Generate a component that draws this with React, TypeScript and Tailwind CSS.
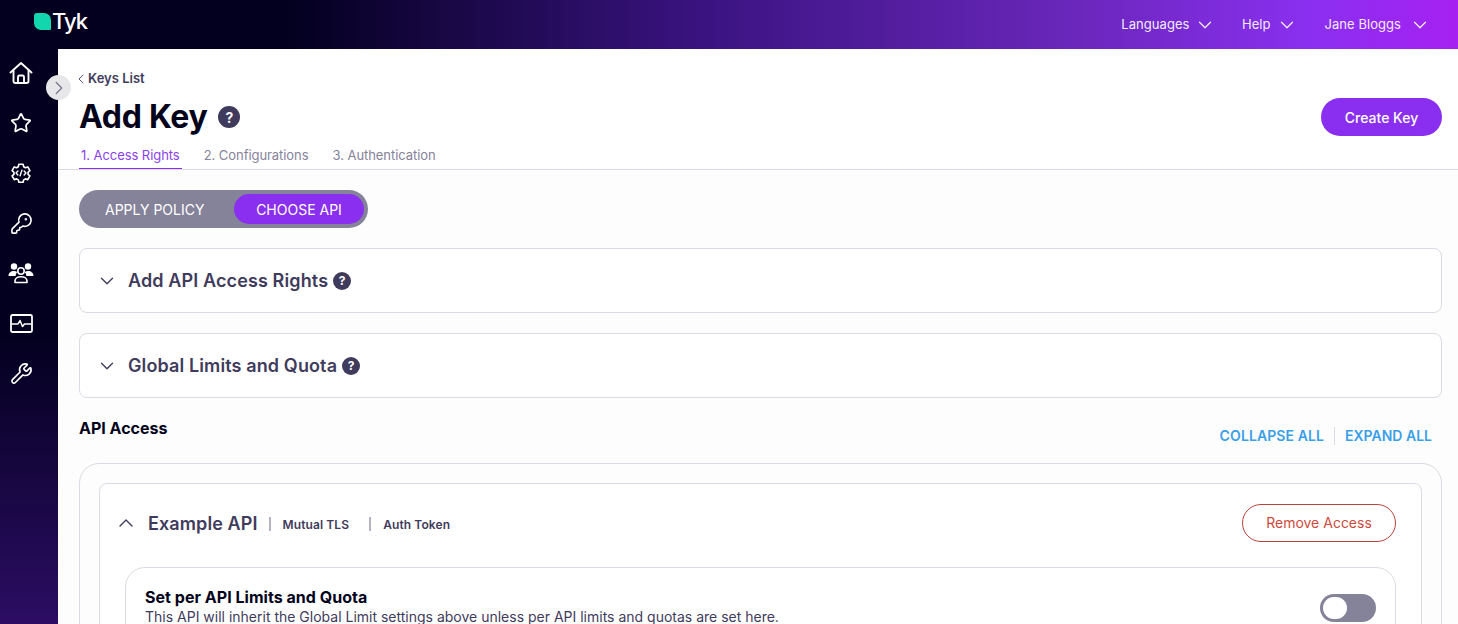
import { ChevronDown, ChevronLeft, ChevronRight, ChevronUp, KeyRound, Star, Wrench } from 'lucide-react'

function HelpDot({ size }: { size: string }) {
  return (
    <span className={`${size} inline-flex items-center justify-center rounded-full bg-[#3f3b5c] font-bold text-white`}>
      ?
    </span>
  )
}

function Home() {
  return (
    <svg width="24" height="24" viewBox="0 0 24 24" fill="none" stroke="white" strokeWidth="1.9" strokeLinejoin="round" strokeLinecap="round">
      <path d="M1.500 11.500 12 2l10.500 9.500" />
      <path d="M4.500 9.500v10.500a2 2 0 0 0 2 2h11a2 2 0 0 0 2-2V9.500" />
      <path d="M9 22v-6a1.500 1.500 0 0 1 1.500-1.500h3A1.500 1.500 0 0 1 15 16v6" />
    </svg>
  )
}

function CodeGear() {
  return (
    <svg width="22" height="22" viewBox="0 0 24 24" fill="none" stroke="white" strokeWidth="1.8" strokeLinejoin="round" strokeLinecap="round">
      <path d="M9.700 2.500h4.600l.6 2.600 1.900 1.100 2.600-.8 2.300 4-2 1.800v2.200l2 1.800-2.300 4-2.600-.8-1.900 1.100-.6 2.600H9.700l-.6-2.600-1.900-1.100-2.600.8-2.300-4 2-1.800v-2.200l-2-1.800 2.300-4 2.600.8 1.900-1.100z" />
      <path d="M8.600 9.800 6.600 12l2 2.200M15.400 9.800l2 2.200-2 2.200M13 9l-2 6" strokeWidth="1.500" />
    </svg>
  )
}

function Team() {
  return (
    <svg width="26" height="22" viewBox="0 0 26 22" fill="white">
      <circle cx="6" cy="4.500" r="3.200" />
      <circle cx="20" cy="4.500" r="3.200" />
      <path d="M0.500 14c0-3 2.200-5 5.500-5 1.300 0 2.400.3 3.200.9A6 6 0 0 0 7.600 14z" />
      <path d="M25.500 14c0-3-2.200-5-5.500-5-1.300 0-2.400.3-3.200.9a6 6 0 0 1 1.600 4.100z" />
      <circle cx="13" cy="9" r="3.200" fill="none" stroke="white" strokeWidth="1.600" />
      <path d="M7 20.500v-1.500c0-2.400 2.600-4.200 6-4.200s6 1.800 6 4.200v1.500z" fill="none" stroke="white" strokeWidth="1.600" strokeLinejoin="round" />
    </svg>
  )
}

function Monitor() {
  return (
    <svg width="23" height="19" viewBox="0 0 23 19" fill="none" stroke="white" strokeLinejoin="round" strokeLinecap="round">
      <rect x="1" y="1" width="21" height="17" rx="1.500" strokeWidth="1.800" />
      <path d="M2 10h6l2-3.500 2.500 6 2-2.500H21" strokeWidth="1.500" />
    </svg>
  )
}

function Sidebar() {
  return (
    <aside className="flex w-[58px] shrink-0 flex-col items-center bg-[linear-gradient(180deg,#03001f_0%,#03001f_50%,#2c0d63_100%)] pr-[16px] pt-[12px]">
      <div className="flex h-[24px] items-center"><Home /></div>
      <div className="mt-[26px] flex h-[24px] items-center"><Star size={22} strokeWidth={1.9} color="white" /></div>
      <div className="mt-[26px] flex h-[24px] items-center"><CodeGear /></div>
      <div className="mt-[26px] flex h-[24px] items-center"><KeyRound size={23} strokeWidth={1.7} color="white" /></div>
      <div className="mt-[26px] flex h-[24px] items-center"><Team /></div>
      <div className="mt-[26px] flex h-[24px] items-center"><Monitor /></div>
      <div className="mt-[26px] flex h-[24px] items-center"><Wrench size={23} strokeWidth={1.7} color="white" /></div>
    </aside>
  )
}

function Header() {
  return (
    <header className="flex h-[49px] shrink-0 items-center justify-between bg-[linear-gradient(90deg,#03001f_0%,#03001f_20%,#3a1380_48%,#6b27bc_74%,#8a2ff0_90%,#a620f2_100%)] pl-[34px] pr-[27px]">
      <div className="-mt-[7px] flex items-start">
        <div className="mt-[5px] h-[17px] w-[17px] rounded-tl-[3px] rounded-tr-[7px] rounded-bl-[7px] rounded-br-[1px] bg-[#12d6ae]" />
        <span className="ml-[1px] text-[22px] font-medium leading-[26px] tracking-[-1px] text-white">Tyk</span>
      </div>
      <nav className="flex items-center text-[13px] tracking-[0.05px] text-[#f1ecfc]">
        <span>Languages</span>
        <ChevronDown size={22} strokeWidth={1.4} className="ml-[4.5px]" />
        <span className="ml-[26px]">Help</span>
        <ChevronDown size={22} strokeWidth={1.4} className="ml-[5.5px]" />
        <span className="ml-[26.5px]">Jane Bloggs</span>
        <ChevronDown size={22} strokeWidth={1.4} className="ml-[8px]" />
      </nav>
    </header>
  )
}

function Accordion({ title }: { title: string }) {
  return (
    <div className="flex h-[65px] items-center rounded-[8px] border border-[#dcdbe3] bg-white pl-[15.5px]">
      <ChevronDown size={22} strokeWidth={1.5} color="#3f3b5c" />
      <span className="ml-[10.5px] text-[18px] font-semibold tracking-[0.12px] text-[#3f3b5c]">{title}</span>
      <HelpDot size="ml-[5px] h-[18px] w-[18px] text-[12px]" />
    </div>
  )
}

export default function App() {
  return (
    <div className="flex h-[624px] w-[1458px] flex-col overflow-hidden bg-white font-['Inter',sans-serif]">
      <Header />
      <div className="relative flex min-h-0 flex-1">
        <Sidebar />
        <button className="absolute left-[46px] top-[26px] flex h-[25px] w-[25px] items-center justify-center rounded-full bg-[#e7e7ea] text-[#77758a]">
          <ChevronRight size={22} strokeWidth={1.3} />
        </button>
        <main className="min-w-0 flex-1 bg-[#fdfdfd]">
          <div className="h-[121px] border-b border-[#dcdbe3] bg-white pl-[21px] pr-[16px] pt-[22px]">
            <div className="flex h-[15px] items-center text-[13px] font-semibold leading-none text-[#3f3b5c]">
              <ChevronLeft size={16} strokeWidth={1.3} className="-ml-[6px] -mr-[1px]" />
              Keys List
            </div>
            <div className="mt-[11px] flex items-center justify-between">
              <div className="flex items-center">
                <h1 className="text-[32px] font-bold leading-[40px] tracking-[-0.3px] text-[#03031c]">Add Key</h1>
                <HelpDot size="ml-[11px] h-[22px] w-[22px] text-[14px]" />
              </div>
              <button className="h-[38px] w-[121px] rounded-full bg-[#8a2ff0] text-[14px] font-medium text-white">Create Key</button>
            </div>
            <div className="mt-[4px] flex text-[13px] tracking-[-0.06px] text-[#85839a]">
              <span className="h-[28px] border-b border-[#8a2ff0] px-[2px] pt-[6px] leading-[16px] text-[#8a3ff0]">1. Access Rights</span>
              <span className="ml-[22px] pt-[6px] leading-[16px]">2. Configurations</span>
              <span className="ml-[24px] pt-[6px] leading-[16px]">3. Authentication</span>
            </div>
          </div>
          <div className="pl-[21px] pr-[16px] pt-[20px]">
            <div className="flex h-[38px] w-[289px] items-center rounded-full bg-[#85839a] pl-[26px] pr-[4px] text-[14px] text-white">
              <span className="w-[129px]">APPLY POLICY</span>
              <span className="flex h-[30px] w-[130px] items-center justify-center rounded-full bg-[#8a2ff0]">CHOOSE API</span>
            </div>
            <div className="mt-[20px] flex flex-col gap-[20px]">
              <Accordion title="Add API Access Rights" />
              <Accordion title="Global Limits and Quota" />
            </div>
            <div className="mt-[20px] flex items-start justify-between">
              <h2 className="text-[16px] font-bold leading-[20px] text-[#03031c]">API Access</h2>
              <div className="mr-[10px] mt-[9px] flex items-center text-[14px] font-semibold leading-[18px] text-[#399fe8]">
                <span className="pr-[10px] tracking-[0.1px]">COLLAPSE ALL</span>
                <span className="border-l border-[#dcdbe3] pl-[10px]">EXPAND ALL</span>
              </div>
            </div>
            <div className="mt-[18px] h-[300px] rounded-[20px] border border-[#dcdbe3] bg-[#fdfdfd] px-[19px] pt-[19px]">
              <div className="h-[260px] rounded-[8px] border border-[#dcdbe3] bg-white pl-[19px] pr-[25px] pt-[20px]">
                <div className="flex h-[38px] items-center justify-between">
                  <div className="flex items-center text-[#3f3b5c]">
                    <ChevronUp size={24} strokeWidth={1.4} className="-ml-[5px]" />
                    <span className="ml-[10px] text-[18px] font-semibold tracking-[0.1px]">Example API</span>
                    <span className="ml-[11px] mt-[1px] h-[14px] border-l-2 border-[#b5b4c2]" />
                    <span className="ml-[12px] mt-[3px] text-[12px] font-semibold tracking-[0.1px]">Mutual TLS</span>
                    <span className="ml-[20px] mt-[1px] h-[14px] border-l-2 border-[#b5b4c2]" />
                    <span className="ml-[12px] mt-[3px] text-[12px] font-semibold tracking-[0.1px]">Auth Token</span>
                  </div>
                  <button className="h-[38px] w-[154px] rounded-full border border-[#b8433a] pb-[1px] text-[14px] text-[#d04a3c]">Remove Access</button>
                </div>
                <div className="ml-[6px] mt-[25px] flex h-[120px] items-start justify-between rounded-[20px] border border-[#dcdbe3] bg-white pl-[19px] pr-[19px] pt-[20px]">
                  <div>
                    <div className="text-[16px] font-bold leading-[19px] tracking-[0.03px] text-[#03031c]">Set per API Limits and Quota</div>
                    <div className="mt-[1px] text-[14px] leading-[17px] text-[#3f3b5c]">This API will inherit the Global Limit settings above unless per API limits and quotas are set here.</div>
                  </div>
                  <div className="mt-[6px] flex h-[28px] w-[56px] items-center rounded-full bg-[#85839a] pl-[3px]">
                    <span className="h-[22px] w-[24px] rounded-full bg-white" />
                  </div>
                </div>
              </div>
            </div>
          </div>
        </main>
      </div>
    </div>
  )
}
